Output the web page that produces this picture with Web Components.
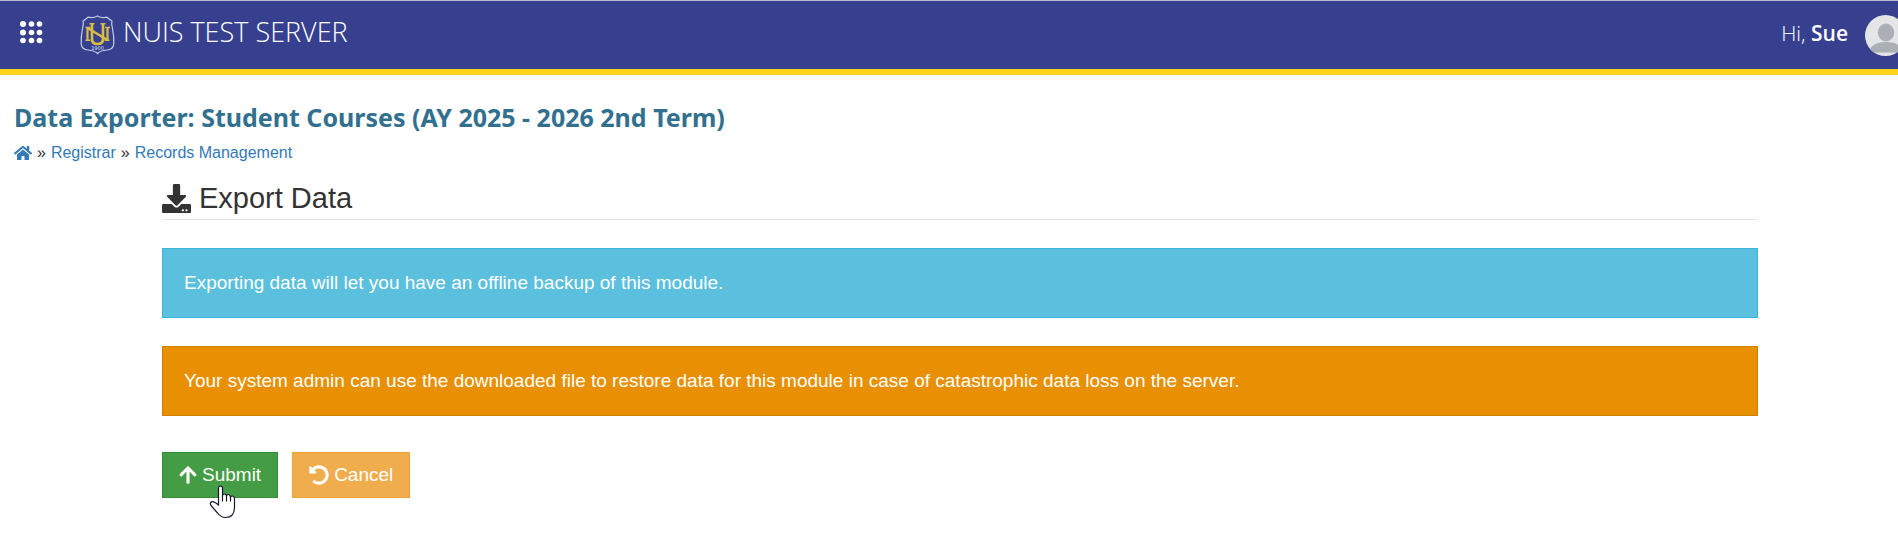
<!DOCTYPE html>
<html lang="en">
<head>
<meta charset="utf-8">
<meta name="viewport" content="width=device-width, initial-scale=1">
<title>Data Exporter</title>
<style>
    body {
        margin: 0;
        min-height: 100vh;
        background: #fff;
        color: #333;
        font-family: "Liberation Sans", Arial, sans-serif;
        font-size: 16px;
    }
</style>
</head>
<body>
    <app-header brand="NUIS TEST SERVER" user="Sue"></app-header>
    <page-title>
        Data Exporter: Student Courses (AY 2025 - 2026 2nd Term)
        <bread-crumb slot="crumbs"></bread-crumb>
    </page-title>
    <export-panel heading="Export Data">
        <alert-box type="info">Exporting data will let you have an offline backup of this module.</alert-box>
        <alert-box type="warning">Your system admin can use the downloaded file to restore data for this module in case of catastrophic data loss on the server.</alert-box>
        <action-button slot="actions" type="success" icon="arrow">Submit<hand-pointer slot="pointer"></hand-pointer></action-button>
        <action-button slot="actions" type="warning" icon="undo">Cancel</action-button>
    </export-panel>

<script>
class AppHeader extends HTMLElement {

    constructor() {
        super();
        this.header = this.attachShadow({ mode: "open" });
    }

    connectedCallback() {
        this.render();
    }

    render() {
        this.header.innerHTML = `
        <style>
            :host {
                display: block;
                overflow: hidden;
                background: #36408f;
                border-top: 1px solid #b9bcc4;
                border-bottom: 6px solid #ffd41c;
                color: white;
                font-family: "Open Sans", "Noto Sans", sans-serif;
            }
            header {
                display: flex;
                align-items: center;
                height: 68px;
                padding-left: 20px;
            }
            button {
                padding: 0;
                border: 0;
                background: none;
                margin: 0 37px 6px 0;
            }
            svg {
                display: block;
            }
            .brand {
                display: flex;
                align-items: center;
                gap: 8px;
                color: white;
                text-decoration: none;
                font-size: 27px;
                font-weight: 300;
                line-height: 36px;
            }
            .brand span {
                padding-bottom: 6px;
            }
            .user {
                display: flex;
                align-items: center;
                gap: 17px;
                margin: 0 -8px 0 auto;
                font-size: 21px;
                font-weight: 300;
            }
            .user span {
                padding-bottom: 4px;
            }
            b {
                font-weight: 600;
            }
        </style>
        <header>
            <button type="button" aria-label="Applications">
                <svg width="23" height="23" fill="#fff">
                    <circle cx="3" cy="3" r="3"/><circle cx="11.5" cy="3" r="2.8"/><circle cx="19.5" cy="3" r="2.8"/>
                    <circle cx="3" cy="11.5" r="3"/><circle cx="11.5" cy="11.5" r="2.8"/><circle cx="19.5" cy="11.5" r="2.8"/>
                    <circle cx="3" cy="19.5" r="2.8"/><circle cx="11.5" cy="19.5" r="2.8"/><circle cx="19.5" cy="19.5" r="2.8"/>
                </svg>
            </button>
            <a class="brand" href="#">
                <svg width="35" height="40" viewBox="0 0 35 40" fill="none">
                    <path d="M17.5 1Q13 3.500 8 2.200Q5.500 4.500 3 6Q4 9 2.600 13Q.8 22 1.200 29Q1.800 34.500 8 35Q14.500 35.500 17.500 38.500Q20.500 35.500 27 35Q33.200 34.500 33.800 29Q34.200 22 32.400 13Q31 9 32 6Q29.500 4.500 27 2.200Q22 3.500 17.500 1Z" stroke="#c5cae6" stroke-width="1.200"/>
                    <g stroke="#d8bf42">
                        <path d="M12 9v15q0 5 5.500 5t5.500-5V9" stroke-width="2.600"/>
                        <path d="M9.500 8.700h5M20.500 8.700h5" stroke-width="1.500"/>
                        <path d="M7.500 13v12M27.500 13v12" stroke-width="2.200"/>
                        <path d="M7.500 13L27.500 25" stroke-width="2.600"/>
                        <path d="M5.500 12.500h5M5.500 25.200h5M25 12.500h5M24.500 25.200h5" stroke-width="1.500"/>
                    </g>
                    <text x="17.500" y="34.500" text-anchor="middle" font-family="DejaVu Sans, sans-serif" font-size="5" font-weight="400" fill="#dde0f1">1900</text>
                </svg>
                <span>${this.getAttribute("brand")}</span>
            </a>
            <div class="user">
                <span>Hi, <b>${this.getAttribute("user")}</b></span>
                <svg width="41" height="41" viewBox="0 0 41 41">
                    <defs><clipPath id="round"><circle cx="20.500" cy="20.500" r="20.500"/></clipPath></defs>
                    <g clip-path="url(#round)">
                        <path fill="#e3e5e7" d="M0 0h41v41H0z"/>
                        <ellipse cx="21" cy="17.500" rx="8.200" ry="9" fill="#aab0b5"/>
                        <path fill="#aab0b5" d="M4 37.500Q6 27 21 27T38 37.500Z"/>
                    </g>
                </svg>
            </div>
        </header>
       `;
    }
}

class PageTitle extends HTMLElement {

    constructor() {
        super();
        this.titleelement = this.attachShadow({ mode: "open" });
    }

    connectedCallback() {
        this.titleelement.innerHTML = `
        <style>
            :host {
                display: block;
                padding: 23px 14px 0;
            }
            h1 {
                margin: 0;
                color: #31708f;
                font-family: "Noto Sans", "Open Sans", sans-serif;
                font-size: 25px;
                font-weight: 700;
                line-height: 38px;
            }
        </style>
        <h1><slot></slot></h1>
        <slot name="crumbs"></slot>
       `;
    }
}

class BreadCrumb extends HTMLElement {

    constructor() {
        super();
        this.crumbs = this.attachShadow({ mode: "open" });
    }

    connectedCallback() {
        this.crumbs.innerHTML = `
        <style>
            :host {
                display: block;
            }
            nav {
                display: flex;
                align-items: center;
                gap: 5px;
                padding-top: 6px;
                line-height: 22px;
            }
            a {
                color: #337ab7;
                text-decoration: none;
            }
            svg {
                display: block;
            }
        </style>
        <nav>
            <a href="#" aria-label="Home">
                <svg width="18" height="16" viewBox="0 0 576 512" fill="currentColor"><path d="M280.400 148.300L96 300.100V464a16 16 0 0 0 16 16l112-.300a16 16 0 0 0 16-16V368a16 16 0 0 1 16-16h64a16 16 0 0 1 16 16v95.600a16 16 0 0 0 16 16l112 .400a16 16 0 0 0 16-16V300L295.700 148.300a12.200 12.200 0 0 0-15.300 0zM571.600 251.500L488 182.600V44a12 12 0 0 0-12-12h-56a12 12 0 0 0-12 12v72.600L318.500 43a48 48 0 0 0-61 0L4.300 251.500a12 12 0 0 0-1.600 16.900l25.500 31a12 12 0 0 0 16.900 1.600l235.200-193.700a12.200 12.200 0 0 1 15.300 0L530.900 301a12 12 0 0 0 16.900-1.600l25.500-31a12 12 0 0 0-1.700-16.900z"/></svg>
            </a>
            <span>»</span>
            <a href="#">Registrar</a>
            <span>»</span>
            <a href="#">Records Management</a>
        </nav>
       `;
    }
}

class ExportPanel extends HTMLElement {

    constructor() {
        super();
        this.panel = this.attachShadow({ mode: "open" });
    }

    connectedCallback() {
        this.panel.innerHTML = `
        <style>
            :host {
                display: block;
                margin: 18px 140px 0 162px;
            }
            h2 {
                display: flex;
                align-items: center;
                gap: 8px;
                margin: 0 0 28px;
                padding-bottom: 5px;
                border-bottom: 1px solid #e5e5e5;
                font-size: 29px;
                font-weight: 400;
                line-height: 32px;
            }
            .alerts {
                display: grid;
                gap: 28px;
            }
            .actions {
                display: flex;
                gap: 14px;
                margin-top: 36px;
            }
        </style>
        <h2>
            <svg width="29" height="29" viewBox="0 0 512 512" fill="currentColor"><path d="M216 0h80c13.300 0 24 10.700 24 24v168h87.700c17.800 0 26.700 21.500 14.100 34.100L269.700 378.300c-7.500 7.500-19.800 7.500-27.300 0L90.100 226.100c-12.600-12.600-3.700-34.100 14.100-34.100H192V24c0-13.300 10.700-24 24-24zm296 376v112c0 13.300-10.700 24-24 24H24c-13.300 0-24-10.700-24-24V376c0-13.300 10.700-24 24-24h146.700l49 49c20.100 20.100 52.500 20.100 72.600 0l49-49H488c13.300 0 24 10.700 24 24zm-124 88c0-11-9-20-20-20s-20 9-20 20 9 20 20 20 20-9 20-20zm64 0c0-11-9-20-20-20s-20 9-20 20 9 20 20 20 20-9 20-20z"/></svg>
            ${this.getAttribute("heading")}
        </h2>
        <div class="alerts"><slot></slot></div>
        <div class="actions"><slot name="actions"></slot></div>
       `;
    }
}

class AlertBox extends HTMLElement {

    constructor() {
        super();
        this.box = this.attachShadow({ mode: "open" });
    }

    connectedCallback() {
        this.box.innerHTML = `
        <style>
            :host {
                display: block;
                padding: 20px 21px;
                border: 1px solid #3db5d8;
                background: #5bc0de;
                color: white;
                font-size: 19px;
                line-height: 28px;
            }
            :host([type="warning"]) {
                border-color: #d08002;
                background: #e99002;
            }
        </style>
        <slot></slot>
       `;
    }
}

const icons = {
    arrow: `<svg width="18" height="20" viewBox="0 0 448 512" fill="currentColor"><path d="M34.900 289.500l-22.200-22.200c-9.400-9.400-9.400-24.600 0-33.900L207 39c9.400-9.400 24.600-9.400 33.900 0l194.300 194.300c9.400 9.400 9.400 24.600 0 33.900L413 289.400c-9.500 9.500-25 9.300-34.300-.400L264 168.600V456c0 13.300-10.700 24-24 24h-32c-13.300 0-24-10.700-24-24V168.600L69.200 289.100c-9.300 9.800-24.800 10-34.300.400z"/></svg>`,
    undo: `<svg width="20" height="20" viewBox="0 0 512 512" fill="currentColor"><path d="M255.500 8c-66.300.100-126.400 26.200-170.900 68.700L49 41C33.900 25.900 8 36.600 8 58v134c0 13.300 10.700 24 24 24h134c21.400 0 32.100-25.900 17-41l-41.800-41.800c30.900-28.900 70.800-44.900 113.200-45.300 92.400-.800 170.300 74 169.500 169.400C423.200 348 349.800 424 256 424c-41.100 0-80-14.700-110.600-41.600-4.700-4.200-11.900-3.900-16.400.600l-39.700 39.700c-4.900 4.900-4.600 12.800.500 17.400C133.800 479.800 192.100 504 256 504c137 0 248-111 248-248C504 119.200 392.400 7.800 255.500 8z"/></svg>`
};

class ActionButton extends HTMLElement {

    constructor() {
        super();
        this.action = this.attachShadow({ mode: "open" });
    }

    connectedCallback() {
        this.action.innerHTML = `
        <style>
            :host {
                display: block;
                position: relative;
            }
            button {
                display: flex;
                align-items: center;
                gap: 5px;
                padding: 8px 16px;
                border: 1px solid #358a39;
                background: #449d44;
                color: white;
                font-family: inherit;
                font-size: 19px;
                line-height: 28px;
            }
            :host([type="warning"]) button {
                border-color: #eea236;
                background: #f0ad4e;
            }
        </style>
        <button type="button">${icons[this.getAttribute("icon")]}<span><slot></slot></span></button>
        <slot name="pointer"></slot>
       `;
    }
}

class HandPointer extends HTMLElement {

    constructor() {
        super();
        this.pointer = this.attachShadow({ mode: "open" });
    }

    connectedCallback() {
        this.pointer.innerHTML = `
        <style>
            :host {
                position: absolute;
                left: 47px;
                top: 33px;
                pointer-events: none;
            }
            svg {
                display: block;
            }
        </style>
        <svg width="27" height="34" fill="#fff" stroke="#15152a" stroke-width="1.200" stroke-linejoin="round" stroke-linecap="round">
            <path d="M9.500 20V3.200Q9.500 1 11.500 1T13.500 3.200V10.500Q14 9 15.500 9T17.500 11Q18 9.500 19.500 9.500T21.500 12Q22 11 23.500 11T25.500 13.500V22Q25.500 32.500 16.500 32.500Q12 32.500 8.500 28L2 20.500Q.500 18 2.500 16.700Q5 16 9.500 20Z"/>
            <path d="M13.500 10.500V16M17.500 11V16M21.500 12V16" fill="none"/>
        </svg>
       `;
    }
}

customElements.define("app-header", AppHeader);
customElements.define("page-title", PageTitle);
customElements.define("bread-crumb", BreadCrumb);
customElements.define("export-panel", ExportPanel);
customElements.define("alert-box", AlertBox);
customElements.define("action-button", ActionButton);
customElements.define("hand-pointer", HandPointer);
</script>
</body>
</html>
